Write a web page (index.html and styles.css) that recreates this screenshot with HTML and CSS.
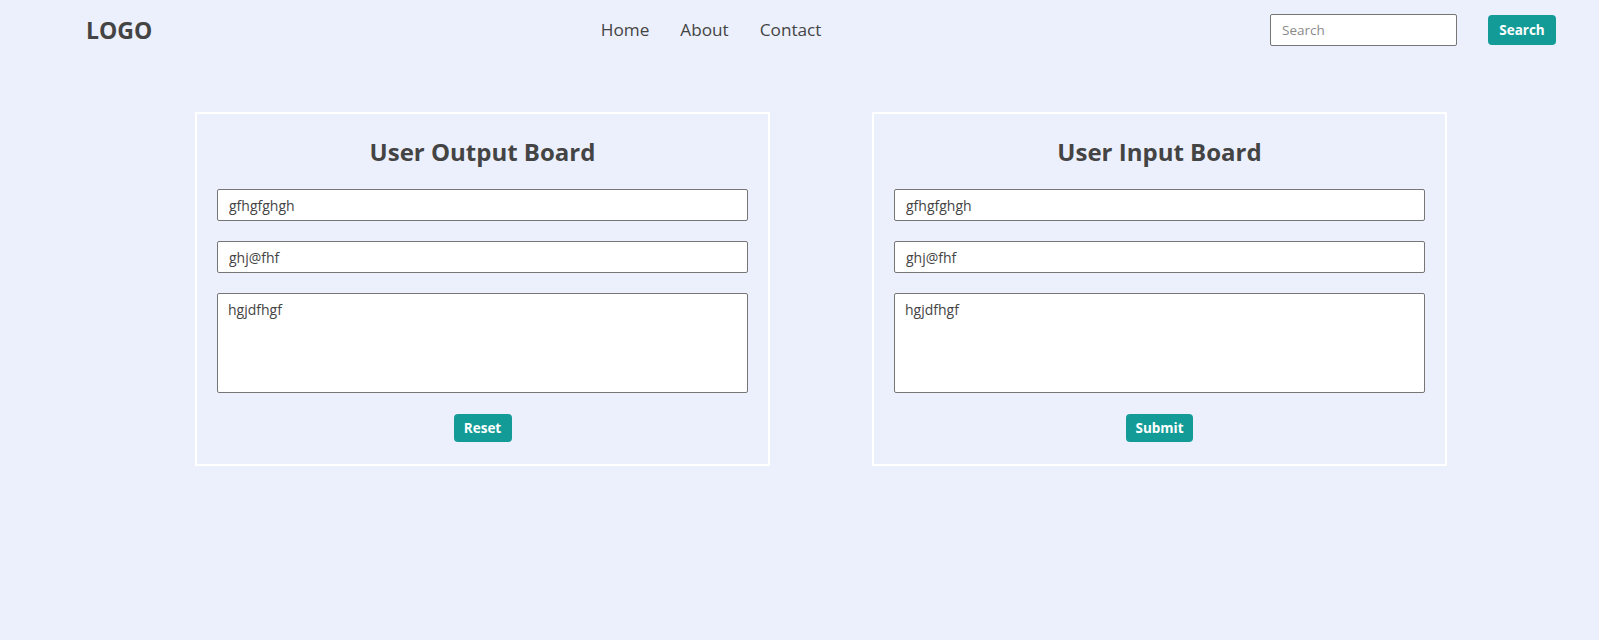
FILE: index.html
```html
<!DOCTYPE html>
<html lang="en">
<head>
<meta charset="utf-8">
<title>User Boards</title>
<link rel="stylesheet" href="styles.css">
</head>
<body>
<header class="navbar">
  <div class="logo">LOGO</div>
  <nav class="nav-links">
    <a href="#">Home</a>
    <a href="#">About</a>
    <a href="#">Contact</a>
  </nav>
  <form class="search-form">
    <input class="search-input" type="text" placeholder="Search">
    <button class="btn btn-search" type="button">Search</button>
  </form>
</header>
<main class="boards">
  <section class="card">
    <h2 class="card-title">User Output Board</h2>
    <input class="field" type="text" value="gfhgfghgh">
    <input class="field" type="text" value="ghj@fhf">
    <textarea class="field area">hgjdfhgf</textarea>
    <div class="actions"><button class="btn btn-reset" type="button">Reset</button></div>
  </section>
  <section class="card">
    <h2 class="card-title">User Input Board</h2>
    <input class="field" type="text" value="gfhgfghgh">
    <input class="field" type="text" value="ghj@fhf">
    <textarea class="field area">hgjdfhgf</textarea>
    <div class="actions"><button class="btn btn-submit" type="button">Submit</button></div>
  </section>
</main>
</body>
</html>
```
FILE: styles.css
```css
* { box-sizing: border-box; }
html, body { margin: 0; padding: 0; }
body {
  background: #ecf0fc;
  color: #464646;
  font-family: "Open Sans", "Noto Sans", sans-serif;
  height: 640px;
}
.navbar {
  display: flex;
  align-items: center;
  justify-content: space-between;
  height: 60px;
  padding: 0 43px 0 86px;
}
.logo {
  font-size: 23px;
  font-weight: 700;
  line-height: 30px;
  color: #444;
}
.nav-links { display: flex; gap: 31px; }
.nav-links a {
  color: #444;
  text-decoration: none;
  font-size: 17.2px;
  line-height: 24px;
}
.search-form { display: flex; align-items: center; gap: 31px; }
.search-input {
  width: 187px;
  height: 32px;
  border: 1px solid #767676;
  border-radius: 2px;
  padding: 0 11px;
  font-family: inherit;
  font-size: 13.5px;
  color: #444;
  background: #fff;
}
.search-input::placeholder { color: #8a8a8a; }
.btn {
  background: #139c97;
  color: #fff;
  border: none;
  border-radius: 4px;
  font-family: inherit;
  font-weight: 700;
  font-size: 13.5px;
  line-height: 18px;
  cursor: pointer;
}
.btn-search { width: 68px; height: 30px; padding: 0; }
.btn-reset { width: 58px; height: 28px; padding: 0; }
.btn-submit { width: 67px; height: 28px; padding: 0; }
.boards {
  display: flex;
  align-items: flex-start;
  gap: 102px;
  padding: 52px 0 0 195px;
}
.card {
  width: 575px;
  border: 2px solid #fff;
  padding: 20px 20px 22px;
  display: flex;
  flex-direction: column;
}
.card-title {
  margin: 0 0 19px;
  text-align: center;
  font-size: 24px;
  line-height: 36px;
  font-weight: 700;
  color: #444;
}
.field {
  display: block;
  width: 100%;
  height: 32px;
  margin: 0 0 20px;
  border: 1px solid #767676;
  border-radius: 2px;
  padding: 0 11px;
  font-family: inherit;
  font-size: 14px;
  color: #444;
  background: #fff;
}
.area {
  height: 100px;
  margin-bottom: 21px;
  padding: 6px 10px;
  resize: none;
  line-height: 20px;
}
.actions { display: flex; justify-content: center; }
```
